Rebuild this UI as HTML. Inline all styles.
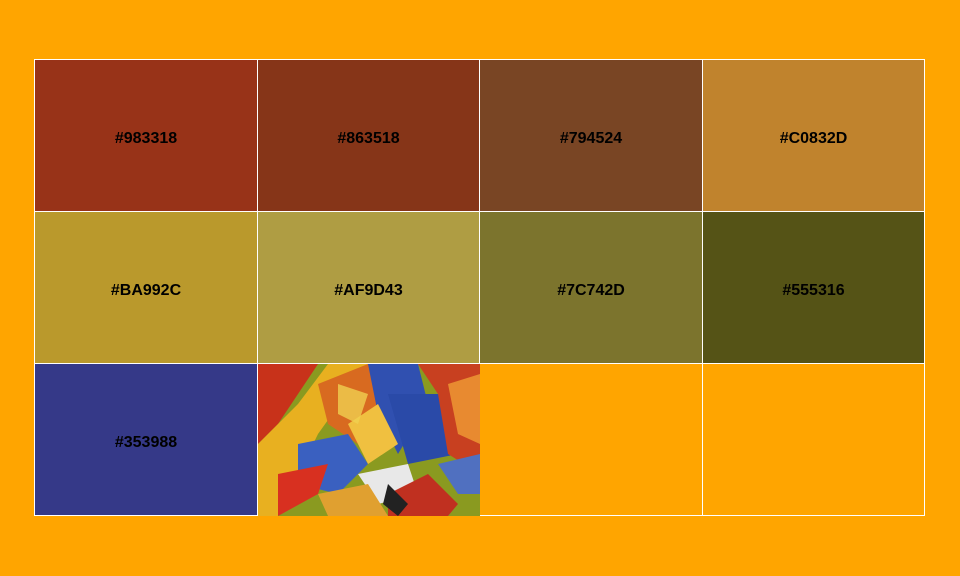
<!DOCTYPE html>
<html><head><style>
body{margin:0;width:960px;height:576px;background:#FFA500;position:relative;overflow:hidden;font-family:"Liberation Sans",Arial,sans-serif}
.c{position:absolute;display:flex;align-items:center;justify-content:center;font-weight:bold;font-size:16px;color:#000;box-sizing:border-box;padding-top:6px}
.w{position:absolute;background:#fff}
</style></head><body>
<div class="w" style="left:34px;top:59px;width:891px;height:457px"></div>
<div class="c" style="left:35px;top:60px;width:222px;height:151px;background:#983318">#983318</div>
<div class="c" style="left:258px;top:60px;width:221px;height:151px;background:#863518">#863518</div>
<div class="c" style="left:480px;top:60px;width:222px;height:151px;background:#794524">#794524</div>
<div class="c" style="left:703px;top:60px;width:221px;height:151px;background:#C0832D">#C0832D</div>
<div class="c" style="left:35px;top:212px;width:222px;height:151px;background:#BA992C">#BA992C</div>
<div class="c" style="left:258px;top:212px;width:221px;height:151px;background:#AF9D43">#AF9D43</div>
<div class="c" style="left:480px;top:212px;width:222px;height:151px;background:#7C742D">#7C742D</div>
<div class="c" style="left:703px;top:212px;width:221px;height:151px;background:#555316">#555316</div>
<div class="c" style="left:35px;top:364px;width:222px;height:151px;background:#353988">#353988</div>
<div class="c" style="left:480px;top:364px;width:222px;height:151px;background:#FFA500"></div>
<div class="c" style="left:703px;top:364px;width:221px;height:151px;background:#FFA500"></div>
<svg style="position:absolute;left:258px;top:364px" width="222" height="152" viewBox="0 0 222 152">
<rect width="222" height="152" fill="#8a9a20"/>
<path d="M0 0H60L20 60 0 80Z" fill="#c8321a"/>
<path d="M0 80 40 40 70 0H110L60 70 20 152H0Z" fill="#e8b020"/>
<path d="M60 20 110 0 130 40 100 80 70 60Z" fill="#d86a20"/>
<path d="M110 0H160L170 40 140 90 120 50Z" fill="#3050b0"/>
<path d="M130 30 190 30 200 90 150 100Z" fill="#2a4aa8"/>
<path d="M160 0H222V110L190 90 180 30Z" fill="#c84020"/>
<path d="M190 20 222 10V80L200 70Z" fill="#e88a30"/>
<path d="M40 80 90 70 110 100 80 130 40 120Z" fill="#3a60c0"/>
<path d="M20 110 70 100 60 130 20 152Z" fill="#d83020"/>
<path d="M90 60 120 40 140 80 110 100Z" fill="#f0c040"/>
<path d="M100 110 150 100 160 130 120 140Z" fill="#e8e8e8"/>
<path d="M60 130 110 120 130 152H70Z" fill="#e0a030"/>
<path d="M130 130 170 110 200 140 190 152H130Z" fill="#c03020"/>
<path d="M180 100 222 90V130L200 130Z" fill="#5070c0"/>
<path d="M80 20 110 30 100 60 80 50Z" fill="#f0d050" opacity=".8"/>
<path d="M130 120 150 140 140 152 125 140Z" fill="#222"/>
</svg>
</body></html>
